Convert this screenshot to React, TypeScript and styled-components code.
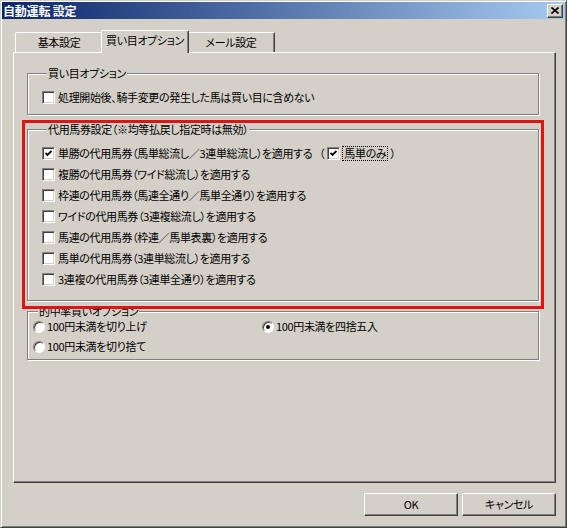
import styled, { createGlobalStyle } from "styled-components";

const GlobalStyle = createGlobalStyle`
  html, body {
    margin: 0;
    padding: 0;
    background: #d4d0c8;
  }
  body {
    font-family: "Noto Sans CJK JP", "Noto Sans", sans-serif;
    font-size: 11px;
    color: #000;
    font-feature-settings: "palt";
    letter-spacing: -0.35px;
  }
`;

const Window = styled.div`
  box-sizing: border-box;
  width: 567px;
  height: 528px;
  display: flex;
  flex-direction: column;
  background: #d4d0c8;
  border: 1px solid;
  border-color: #d4d0c8 #404040 #404040 #d4d0c8;
  box-shadow: inset 1px 1px 0 #fff, inset -1px -1px 0 #808080;
  padding: 1px;
`;

const TitleBar = styled.div`
  height: 17px;
  flex: none;
  display: flex;
  align-items: center;
  justify-content: space-between;
  padding: 0 2px 0 1px;
  background: linear-gradient(to right, #0a246a, #a6caf0);
`;

const Title = styled.span`
  color: #fff;
  font-weight: 700;
  font-size: 12px;
  line-height: 13px;
  letter-spacing: -0.2px;
`;

const CloseButton = styled.span`
  box-sizing: border-box;
  width: 16px;
  height: 14px;
  display: flex;
  align-items: center;
  justify-content: center;
  background: #d4d0c8;
  border: 1px solid;
  border-color: #fff #404040 #404040 #fff;
  box-shadow: inset -1px -1px 0 #808080;
`;

const Body = styled.div`
  flex: 1;
  display: flex;
  flex-direction: column;
  padding: 11px 9px 10px 11px;
`;

const TabStrip = styled.div`
  display: flex;
  align-items: flex-end;
  height: 22px;
  padding-left: 2px;
  position: relative;
  z-index: 1;
`;

const Tab = styled.div<{ $active?: boolean }>`
  box-sizing: border-box;
  width: 88px;
  height: ${(p) => (p.$active ? "23px" : "20px")};
  margin: ${(p) => (p.$active ? "0 -2px -1px" : "0")};
  position: relative;
  z-index: ${(p) => (p.$active ? 2 : 1)};
  display: flex;
  align-items: center;
  justify-content: center;
  padding-bottom: ${(p) => (p.$active ? "3px" : "0")};
  background: #d4d0c8;
  border: 1px solid;
  border-bottom: none;
  border-color: #fff #404040 transparent #fff;
  border-radius: 2px 2px 0 0;
  box-shadow: inset -1px 0 0 #808080;
  line-height: 13px;
`;

const Panel = styled.div`
  flex: 1;
  display: flex;
  flex-direction: column;
  padding: 14px 16px 0 13px;
  border: 1px solid;
  border-color: #fff #404040 #404040 #fff;
  box-shadow: inset -1px -1px 0 #808080;
`;

const Group = styled.fieldset<{ $pad: string; $gap?: number }>`
  margin: 0;
  min-width: 0;
  padding: ${(p) => p.$pad};
  border: 1px solid #808080;
  box-shadow: inset 1px 1px 0 #fff, 1px 1px 0 #fff;
  display: flex;
  flex-direction: column;
  gap: ${(p) => p.$gap ?? 0}px;
`;

const Legend = styled.legend`
  margin-left: 5px;
  padding: 0 1px;
  line-height: 13px;
  background: #d4d0c8;
`;

const Highlight = styled.div`
  position: relative;
  margin-top: 8px;

  &::after {
    content: "";
    position: absolute;
    inset: -3px -5px -8px -5px;
    border: 3px solid #e01212;
    pointer-events: none;
    z-index: 3;
  }
`;

const Row = styled.div`
  display: flex;
  align-items: center;
  height: 15px;
  gap: 3px;
  line-height: 13px;
  white-space: nowrap;
`;

const CheckBox = styled.span`
  box-sizing: border-box;
  width: 13px;
  height: 13px;
  flex: none;
  display: flex;
  align-items: center;
  justify-content: center;
  background: #fff;
  border: 1px solid;
  border-color: #808080 #fff #fff #808080;
  box-shadow: inset 1px 1px 0 #404040, inset -1px -1px 0 #d4d0c8;
`;

const Paren = styled.span`
  margin-left: 4px;
`;

const FocusLabel = styled.span`
  outline: 1px dotted #000;
  padding: 0 1px;
`;

const RadioGrid = styled.div`
  display: grid;
  grid-template-columns: 229px auto;
  row-gap: 5px;
`;

const Radio = styled.span<{ $checked?: boolean }>`
  box-sizing: border-box;
  width: 12px;
  height: 12px;
  flex: none;
  border-radius: 50%;
  background: #fff;
  border: 1px solid;
  border-color: #808080 #fff #fff #808080;
  box-shadow: inset 1px 1px 0 #404040;
  display: flex;
  align-items: center;
  justify-content: center;

  &::after {
    content: "";
    width: 4px;
    height: 4px;
    border-radius: 50%;
    background: ${(p) => (p.$checked ? "#000" : "transparent")};
  }
`;

const RadioRow = styled(Row)`
  gap: 2px;
`;

const Buttons = styled.div`
  display: flex;
  justify-content: flex-end;
  gap: 4px;
  margin-top: 10px;
`;

const Button = styled.div`
  box-sizing: border-box;
  width: 94px;
  height: 23px;
  display: flex;
  align-items: center;
  justify-content: center;
  background: #d4d0c8;
  border: 1px solid;
  border-color: #fff #404040 #404040 #fff;
  box-shadow: inset -1px -1px 0 #808080;
  line-height: 13px;
`;

const Check = () => (
  <svg width="7" height="7" viewBox="0 0 7 7">
    <polyline points="0.5,3 2.5,5 6.5,1" fill="none" stroke="#000" strokeWidth="1.8" />
  </svg>
);

const CheckRow = ({ label, checked, children }: { label: string; checked?: boolean; children?: React.ReactNode }) => (
  <Row>
    <CheckBox>{checked && <Check />}</CheckBox>
    <span>{label}</span>
    {children}
  </Row>
);

const substitutes = [
  "複勝の代用馬券（ワイド総流し）を適用する",
  "枠連の代用馬券（馬連全通り／馬単全通り）を適用する",
  "ワイドの代用馬券（3連複総流し）を適用する",
  "馬連の代用馬券（枠連／馬単表裏）を適用する",
  "馬単の代用馬券（3連単総流し）を適用する",
  "3連複の代用馬券（3連単全通り）を適用する",
];

export default function App() {
  return (
    <>
      <GlobalStyle />
      <Window>
        <TitleBar>
          <Title>自動運転 設定</Title>
          <CloseButton>
            <svg width="8" height="7" viewBox="0 0 8 7">
              <path d="M0.5 0.5 L7.5 6.5 M7.5 0.5 L0.5 6.5" stroke="#000" strokeWidth="1.6" />
            </svg>
          </CloseButton>
        </TitleBar>
        <Body>
          <TabStrip>
            <Tab>基本設定</Tab>
            <Tab $active>買い目オプション</Tab>
            <Tab>メール設定</Tab>
          </TabStrip>
          <Panel>
            <Group $pad="10px 8px 9px 14px">
              <Legend>買い目オプション</Legend>
              <CheckRow label="処理開始後、騎手変更の発生した馬は買い目に含めない" />
            </Group>

            <Highlight>
              <Group $pad="10px 8px 13px 14px" $gap={6}>
                <Legend>代用馬券設定（※均等払戻し指定時は無効）</Legend>
                <CheckRow label="単勝の代用馬券（馬単総流し／3連単総流し）を適用する" checked>
                  <Paren>（</Paren>
                  <CheckBox>
                    <Check />
                  </CheckBox>
                  <FocusLabel>馬単のみ</FocusLabel>
                  <span>）</span>
                </CheckRow>
                {substitutes.map((s) => (
                  <CheckRow key={s} label={s} />
                ))}
              </Group>
            </Highlight>

            <Group $pad="1px 8px 5px 5px" style={{ marginTop: 4 }}>
              <Legend>的中率買いオプション</Legend>
              <RadioGrid>
                <RadioRow>
                  <Radio />
                  <span>100円未満を切り上げ</span>
                </RadioRow>
                <RadioRow>
                  <Radio $checked />
                  <span>100円未満を四捨五入</span>
                </RadioRow>
                <RadioRow>
                  <Radio />
                  <span>100円未満を切り捨て</span>
                </RadioRow>
              </RadioGrid>
            </Group>
          </Panel>
          <Buttons>
            <Button>OK</Button>
            <Button>キャンセル</Button>
          </Buttons>
        </Body>
      </Window>
    </>
  );
}
